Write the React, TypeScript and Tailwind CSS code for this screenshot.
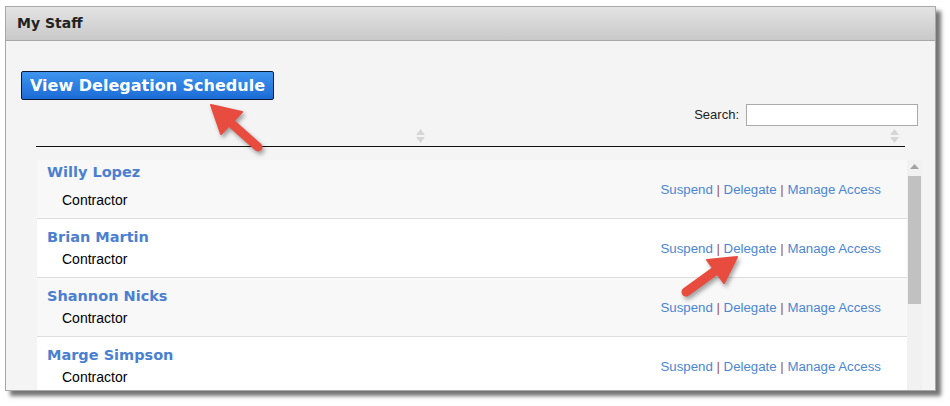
import React from 'react';

const staff = [
  { name: 'Willy Lopez', role: 'Contractor' },
  { name: 'Brian Martin', role: 'Contractor' },
  { name: 'Shannon Nicks', role: 'Contractor' },
  { name: 'Marge Simpson', role: 'Contractor' },
];

function SortIcon() {
  return (
    <svg width="9" height="14" viewBox="0 0 9 14" className="block">
      <path d="M4.5 0 L9 6 L0 6 Z" fill="#d6d6d6" />
      <path d="M0 8 L9 8 L4.5 14 Z" fill="#d6d6d6" />
    </svg>
  );
}

function Arrow({ tail, base, w1, w2, tip }: { tail: string; base: string; w1: string; w2: string; tip: string }) {
  return (
    <g>
      <path d={`M${base} L${tail}`} stroke="#e84c3f" strokeWidth="9" strokeLinecap="round" />
      <polygon points={`${tip} ${w1} ${w2}`} fill="#e84c3f" strokeLinejoin="round" stroke="#e84c3f" strokeWidth="2" />
    </g>
  );
}

function Row({ name, role, odd, first }: { name: string; role: string; odd: boolean; first: boolean }) {
  return (
    <div
      className={`flex items-center justify-between h-[59px] shrink-0 border-b border-[#dddddd] ${odd ? 'bg-[#f8f8f8]' : 'bg-white'}`}
    >
      <div className={`flex flex-col pl-[10px] ${first ? '-mt-[6px]' : '-mt-[1px]'}`}>
        <span className="text-[14.5px] font-bold text-[#4a7fd1] leading-[18px] font-['DejaVu_Sans',sans-serif]">{name}</span>
        <span className={`pl-[15px] text-[14px] text-black leading-[18px] font-['Liberation_Sans',Arial,sans-serif] ${first ? 'mt-[10px]' : 'mt-[4px]'}`}>
          {role}
        </span>
      </div>
      <div className="pr-[26px] text-[13.25px] font-['Liberation_Sans',Arial,sans-serif] text-[#4a86d4] mt-[1px]">
        Suspend <span className="text-[#9b5a1e]">|</span> Delegate <span className="text-[#9b5a1e]">|</span> Manage Access
      </div>
    </div>
  );
}

export default function App() {
  return (
    <div className="relative w-[950px] h-[406px] bg-white overflow-hidden pt-[6px] pl-[5px]">
      <div className="w-[931px] h-[385px] border border-[#a8a8a8] bg-[#f4f4f4] flex flex-col overflow-hidden shadow-[5px_5px_4px_rgba(0,0,0,0.55)]">
        <div className="h-[34px] shrink-0 bg-gradient-to-b from-[#e3e3e3] to-[#c9c9c9] border-b border-[#a8a8a8] flex items-center pl-[11px]">
          <span className="text-[14px] font-bold text-[#222] font-['DejaVu_Sans',sans-serif]">My Staff</span>
        </div>

        <div className="flex flex-col pl-[15px] flex-1 min-h-0">
          <div className="mt-[30px]">
            <button className="h-[29px] px-[8px] rounded-[2px] border border-[#0d1a33] bg-gradient-to-b from-[#3f95ee] to-[#1c6bd6] text-white text-[16px] font-bold font-['DejaVu_Sans',sans-serif] leading-none">
              View Delegation Schedule
            </button>
          </div>

          <div className="flex justify-end items-center pr-[17px] mt-[4px]">
            <span className="text-[13px] text-[#222] font-['Liberation_Sans',Arial,sans-serif] mr-[7px]">Search:</span>
            <input className="w-[172px] h-[22px] border border-[#a9a9a9] bg-white outline-none" />
          </div>

          <div className="ml-[15px] w-[869px] h-[21px] border-b border-[#111] flex items-start pt-[3px]">
            <div className="w-[389px] flex justify-end">
              <SortIcon />
            </div>
            <div className="flex-1 flex justify-end pr-[6px]">
              <SortIcon />
            </div>
          </div>

          <div className="ml-[16px] mt-[13px] w-[885px] flex-1 min-h-0 flex overflow-hidden">
            <div className="w-[870px] flex flex-col">
              {staff.map((s, i) => (
                <Row key={s.name} name={s.name} role={s.role} odd={i % 2 === 0} first={i === 0} />
              ))}
            </div>
            <div className="w-[15px] bg-[#f1f1f1] flex flex-col items-center pt-[2px]">
              <svg width="9" height="6" viewBox="0 0 9 6" className="block mt-[2px]">
                <path d="M4.5 0 L9 5 L0 5 Z" fill="#a3a3a3" />
              </svg>
              <div className="mt-[6px] w-[13px] h-[128px] bg-[#c1c1c1]" />
            </div>
          </div>
        </div>
      </div>

      <svg
        className="absolute left-0 top-0 pointer-events-none drop-shadow-[2px_3px_2px_rgba(0,0,0,0.35)]"
        width="950"
        height="406"
        viewBox="0 0 950 406"
      >
        <Arrow tip="211,105" w1="221,134" w2="242,112" base="231,123" tail="258,147" />
        <Arrow tip="737,257" w1="724,283" w2="707,260" base="715,271" tail="686,292" />
      </svg>
    </div>
  );
}
